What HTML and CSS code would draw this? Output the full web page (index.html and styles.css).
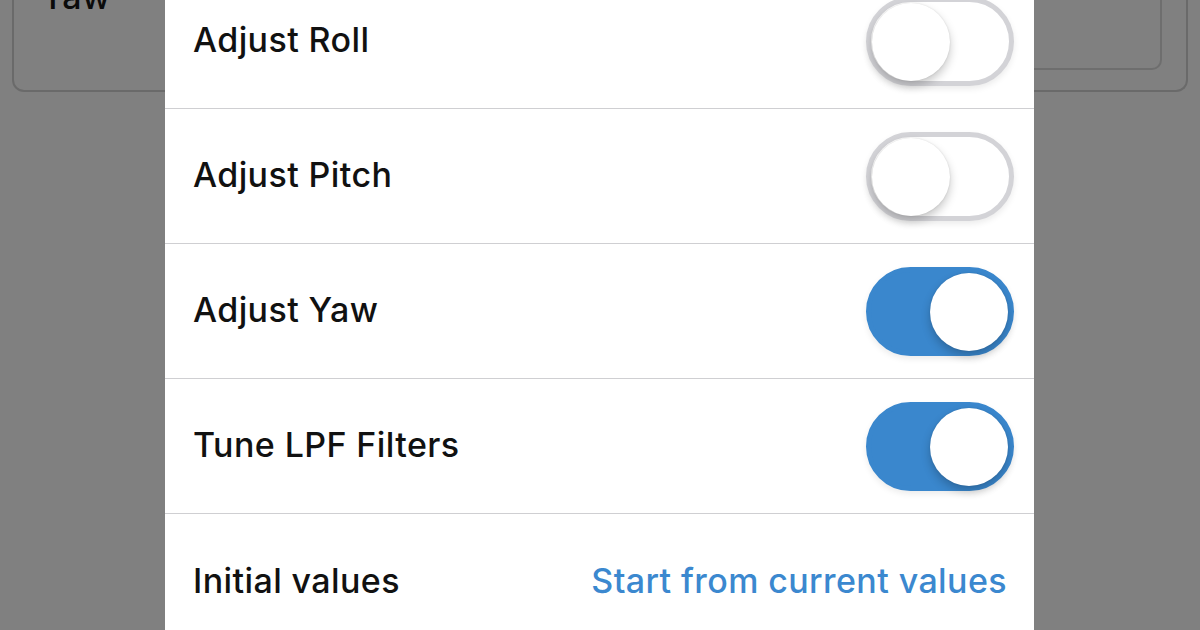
FILE: index.html
```html
<!DOCTYPE html>
<html lang="en">
<head>
    <meta charset="UTF-8">
    <title>Autotune options</title>
    <link rel="stylesheet" href="styles.css">
</head>
<body>
    <div class="page">
        <div class="card">
            <span class="card-label">Yaw</span>
            <div class="field"></div>
        </div>
    </div>

    <div class="sheet">
        <div class="row">
            <span class="row-label">Adjust Roll</span>
            <span class="toggle"></span>
        </div>
        <div class="row">
            <span class="row-label">Adjust Pitch</span>
            <span class="toggle"></span>
        </div>
        <div class="row">
            <span class="row-label">Adjust Yaw</span>
            <span class="toggle on"></span>
        </div>
        <div class="row">
            <span class="row-label">Tune LPF Filters</span>
            <span class="toggle on"></span>
        </div>
        <div class="row last">
            <span class="row-label">Initial values</span>
            <span class="row-action">Start from current values</span>
        </div>
    </div>
</body>
</html>
```

FILE: styles.css
```css
body {
    margin: 0;
    height: 630px;
    overflow: hidden;
    background: #808080;
    font-family: Inter, "Noto Sans", sans-serif;
    color: #111;
    position: relative;
}
.page {
    padding: 0 12px;
}
.card {
    margin-top: -40px;
    height: 130px;
    border: 2px solid #6a6a6a;
    border-top: none;
    border-radius: 0 0 12px 12px;
    display: flex;
    justify-content: space-between;
}
.card-label {
    font-size: 34px;
    font-weight: 500;
    letter-spacing: 0.4px;
    margin: 16px 0 0 27px;
    color: #0b0b0b;
}
.field {
    width: 300px;
    height: 108px;
    margin-right: 24px;
    border: 2px solid #6e6e6e;
    border-top: none;
    border-radius: 0 0 10px 10px;
}

.sheet {
    position: absolute;
    left: 165px;
    top: -26px;
    width: 869px;
    background: #fff;
}
.row {
    height: 134px;
    border-bottom: 1px solid #cfcfd2;
    display: flex;
    align-items: center;
    justify-content: space-between;
    padding: 0 20px 0 28px;
}
.row.last {
    height: 136px;
    border-bottom: none;
    padding-right: 27px;
}
.row-label,
.row-action {
    font-size: 34px;
    font-weight: 500;
    letter-spacing: 0.4px;
    margin-top: -3px;
}
.row-action {
    color: #3b88cf;
}

.toggle {
    position: relative;
    box-sizing: border-box;
    width: 148px;
    height: 89px;
    border-radius: 45px;
    border: 5px solid #d3d3d7;
    background: #fff;
    box-shadow: 0 3px 6px rgba(0,0,0,0.08);
}
.toggle::after {
    content: "";
    position: absolute;
    left: 1px;
    top: 1px;
    width: 78px;
    height: 78px;
    border-radius: 50%;
    background: #fff;
    box-shadow: 0 5px 10px rgba(0,0,0,0.22), 0 0 2px rgba(0,0,0,0.12);
}
.toggle.on {
    background: #3a87cd;
    border-color: #3a87cd;
}
.toggle.on::after {
    left: auto;
    right: 1px;
}
```
